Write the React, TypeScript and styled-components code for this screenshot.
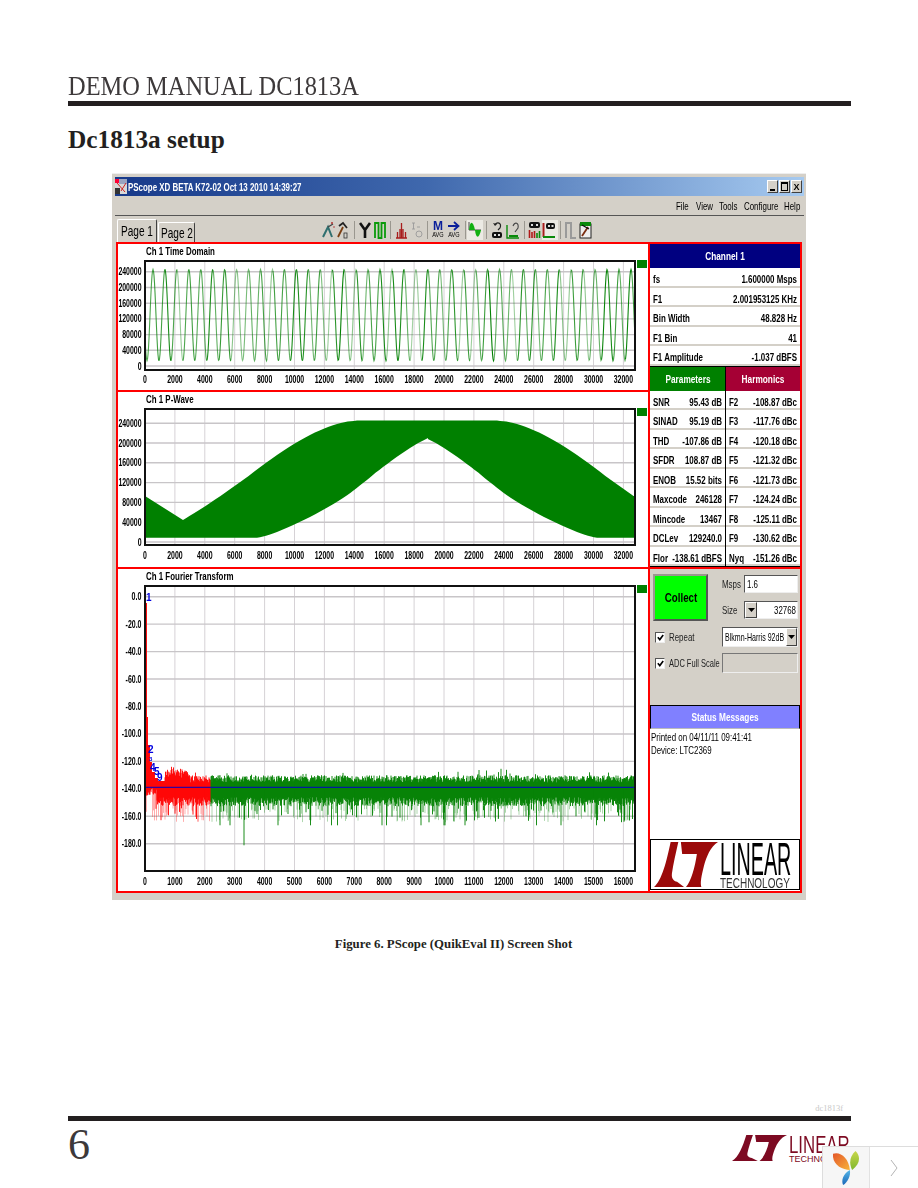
import React from "react";
import styled, { createGlobalStyle } from "styled-components";

const GlobalStyle = createGlobalStyle`
  html, body {
    margin: 0;
    padding: 0;
    background: #fff;
  }
`;

const SANS = `"Liberation Sans", Arial, sans-serif`;
const SERIF = `"Liberation Serif", "Times New Roman", serif`;
const INK = "#231f20";
const GRAY = "#d4d0c8";
const PLOT_GREEN = "#008000";
const PLOT_RED = "#ff0000";

// small seeded random so the noise comes out the same on every load
const seeded = (seed: number) => () => {
  seed = (seed + 0x6d2b79f5) | 0;
  let t = Math.imul(seed ^ (seed >>> 15), 1 | seed);
  t = (t + Math.imul(t ^ (t >>> 7), 61 | t)) ^ t;
  return ((t ^ (t >>> 14)) >>> 0) / 4294967296;
};

/* ---------- plots (local coords, svg starts at x=118) ---------- */

type AxisProps = {
  height: number;
  frameTop: number;
  frameBottom: number;
  yTicks: { label: string; y: number }[];
  xTicks: { label: string; x: number }[];
  labelY: number;
  children?: React.ReactNode;
};

const PLOT_LEFT = 27;
const PLOT_RIGHT = 517;

// the screenshot was squeezed sideways, so every label gets its measured width
const labelWidth = (label: string) =>
  label.split("").reduce((sum, c) => sum + (/\d/.test(c) ? 3.85 : 2.2), 0);

const Axes = ({ height, frameTop, frameBottom, yTicks, xTicks, labelY, children }: AxisProps) => (
  <PlotSvg width={519} height={height} viewBox={`0 0 519 ${height}`}>
    {xTicks.map((t) => (
      <line key={t.label} x1={t.x} x2={t.x} y1={frameTop} y2={frameBottom} stroke="#d6d2d6" strokeWidth={1} />
    ))}
    {yTicks.map((t) => (
      <line key={t.label} x1={PLOT_LEFT} x2={PLOT_RIGHT} y1={t.y} y2={t.y} stroke="#c8c5c8" strokeWidth={1.4} />
    ))}
    {children}
    <rect
      x={PLOT_LEFT}
      y={frameTop}
      width={PLOT_RIGHT - PLOT_LEFT}
      height={frameBottom - frameTop}
      fill="none"
      stroke="#111"
      strokeWidth={2}
    />
    {yTicks.map((t) => (
      <AxisText
        key={t.label}
        x={23.5}
        y={t.y + 3.5}
        textAnchor="end"
        textLength={labelWidth(t.label)}
        lengthAdjust="spacingAndGlyphs"
      >
        {t.label}
      </AxisText>
    ))}
    {xTicks.map((t) => (
      <AxisText
        key={t.label}
        x={t.x}
        y={labelY}
        textAnchor="middle"
        textLength={labelWidth(t.label)}
        lengthAdjust="spacingAndGlyphs"
      >
        {t.label}
      </AxisText>
    ))}
  </PlotSvg>
);

const codeTicks = (y0: number, step: number) =>
  ["0", "40000", "80000", "120000", "160000", "200000", "240000"].map((label, i) => ({
    label,
    y: y0 - i * step,
  }));

const sampleTicks = Array.from({ length: 17 }, (_, i) => ({
  label: String(i * 2000),
  x: PLOT_LEFT + i * 29.9,
}));

const TimeDomainPlot = () => {
  const rand = seeded(11);
  const yOf = (code: number) => 108 - (code / 40000) * 15.7;
  const period = 11.95;
  const segments: { d: string; o: number }[] = [];
  let d = "";
  let lastSign = 0;
  let o = 0.7;
  for (let px = 0; px <= 490; px += 0.5) {
    const phase = (2 * Math.PI * (px - 8)) / period + Math.PI / 2;
    const code = 129800 + 116300 * Math.sin(phase);
    const slope = Math.cos(phase) > 0 ? 1 : -1;
    const point = `${PLOT_LEFT + px} ${yOf(code).toFixed(1)}`;
    if (slope !== lastSign) {
      if (d) segments.push({ d: `${d} L${point}`, o });
      d = `M${point}`;
      o = 0.35 + rand() * 0.65;
      lastSign = slope;
    } else {
      d += ` L${point}`;
    }
  }
  segments.push({ d, o });
  return (
    <Axes
      height={130}
      frameTop={3}
      frameBottom={112}
      yTicks={codeTicks(108, 15.7)}
      xTicks={sampleTicks}
      labelY={125}
    >
      {segments.map((s, i) => (
        <path key={i} d={s.d} fill="none" stroke={PLOT_GREEN} strokeOpacity={s.o} strokeWidth={1.1} />
      ))}
    </Axes>
  );
};

type Pt = [number, number];

// catmull-rom through the points read off the reference
const smooth = (pts: Pt[]): Pt[] => {
  const out: Pt[] = [];
  for (let i = 0; i < pts.length - 1; i++) {
    const p0 = pts[Math.max(i - 1, 0)];
    const p1 = pts[i];
    const p2 = pts[i + 1];
    const p3 = pts[Math.min(i + 2, pts.length - 1)];
    for (let s = 0; s < 6; s++) {
      const t = s / 6;
      const at = (k: 0 | 1) =>
        0.5 *
        (2 * p1[k] +
          (p2[k] - p0[k]) * t +
          (2 * p0[k] - 5 * p1[k] + 4 * p2[k] - p3[k]) * t * t +
          (3 * p1[k] - p0[k] - 3 * p2[k] + p3[k]) * t * t * t);
      out.push([at(0), at(1)]);
    }
  }
  out.push(pts[pts.length - 1]);
  return out;
};

const PWavePlot = () => {
  const toLocal = ([x, y]: Pt): string => `${(x - 118).toFixed(1)},${(y - 406).toFixed(1)}`;
  // right half mirrors round x=427
  const mirror = (points: Pt[]) =>
    [...points]
      .reverse()
      .map(([x, y]): Pt => [854 - x, y])
      .filter(([x]) => x <= 635);
  const rise = smooth([[183, 520], [210, 503], [243, 480], [277, 455], [310, 435], [337, 424], [357, 420.6], [375, 420.6]]).map(
    ([x, y]): Pt => [x, Math.max(y, 420.6)],
  );
  const lift = smooth([[240, 537.7], [257, 537.7], [277, 532], [310, 517], [343, 498], [363, 483], [383, 467], [410, 448], [428, 438]]).map(
    ([x, y]): Pt => [x, Math.min(y, 537.7)],
  );
  const upper: Pt[] = [[145, 496], ...rise, ...mirror(rise), [635, 496]];
  const lower: Pt[] = [[145, 537.7], ...lift, ...mirror(lift.slice(0, -1)), [635, 537.7]];
  const poly = [...upper, ...[...lower].reverse()].map(toLocal).join(" ");
  return (
    <Axes
      height={158}
      frameTop={3}
      frameBottom={139}
      yTicks={codeTicks(136, 19.8)}
      xTicks={sampleTicks}
      labelY={153}
    >
      <polygon points={poly} fill={PLOT_GREEN} />
    </Axes>
  );
};

const dbTicks = ["0.0", "-20.0", "-40.0", "-60.0", "-80.0", "-100.0", "-120.0", "-140.0", "-160.0", "-180.0"].map(
  (label, i) => ({ label, y: 13.7 + i * 27.45 }),
);

const binTicks = Array.from({ length: 17 }, (_, i) => ({
  label: String(i * 1000),
  x: PLOT_LEFT + i * 29.9,
}));

const FLOOR = 204.3;

const redCeiling = (px: number) => {
  if (px < 2) return 20;
  if (px < 3) return 134;
  if (px < 5) return 162;
  if (px < 7) return 179;
  if (px < 10) return 189;
  if (px < 13) return 195;
  if (px < 20) return 198;
  return 0;
};

const SpectrumPlot = () => {
  const rand = seeded(1813);
  const buildNoise = (from: number, to: number) => {
    let solid = "";
    let pale = "";
    for (let px = from; px < to; px += 0.5) {
      const x = (PLOT_LEFT + px).toFixed(1);
      const bump = rand() < 0.06 ? 7 * rand() : 0;
      const ceiling = redCeiling(px);
      const hot = px < 45 && px >= 15;
      const top = ceiling || FLOOR - 5 - rand() * 7 - bump - (hot ? 3 + rand() * 7 : 0);
      const bottom = FLOOR + 10 + rand() * 9 + (px < 12 ? -10 : 0);
      solid += `M${x} ${top.toFixed(1)}V${bottom.toFixed(1)}`;
      const r = rand();
      if (r < 0.3) {
        const depth = r < 0.003 ? 58 : r < 0.02 ? 38 : 21 + rand() * 14;
        const spike = (FLOOR + depth).toFixed(1);
        if (r < 0.12) solid += `M${x} ${bottom.toFixed(1)}V${spike}`;
        else pale += `M${x} ${bottom.toFixed(1)}V${spike}`;
      }
    }
    return { solid, pale };
  };
  const red = buildNoise(0, 66);
  const green = buildNoise(66, 490);
  return (
    <Axes
      height={306}
      frameTop={3}
      frameBottom={288}
      yTicks={dbTicks}
      xTicks={binTicks}
      labelY={302}
    >
      <path d={red.pale} stroke={PLOT_RED} strokeOpacity={0.4} strokeWidth={0.8} fill="none" />
      <path d={green.pale} stroke={PLOT_GREEN} strokeOpacity={0.4} strokeWidth={0.8} fill="none" />
      <path d={red.solid} stroke={PLOT_RED} strokeWidth={0.9} fill="none" />
      <path d={green.solid} stroke={PLOT_GREEN} strokeWidth={0.9} fill="none" />
      <line x1={PLOT_LEFT} x2={PLOT_RIGHT} y1={FLOOR} y2={FLOOR} stroke="#0000c8" strokeWidth={1} />
      <MarkerText x={28} y={18}>1</MarkerText>
      <MarkerText x={30} y={170}>2</MarkerText>
      <MarkerText x={31} y={178} $small>3</MarkerText>
      <MarkerText x={32} y={188}>4</MarkerText>
      <MarkerText x={36} y={192}>5</MarkerText>
      <MarkerText x={39} y={198}>9</MarkerText>
    </Axes>
  );
};

/* ---------- drawn bits ---------- */

const LtMark = ({ color, width, height }: { color: string; width: number; height: number }) => (
  <svg width={width} height={height} viewBox="0 0 100 60" preserveAspectRatio="none">
    <path fill={color} d="M0 60 C12 52 20 25 26 0 H38 C34 15 30 30 28 42 C27 49 31 52 36 53 L47 60 Z" />
    <path fill={color} d="M42 0 H100 C88 6 82 20 78 32 C74 46 72 54 74 60 H50 C58 52 64 34 67 16 H44 Z" />
  </svg>
);

const AppIcon = () => (
  <svg width={12} height={15} viewBox="0 0 12 15">
    <rect width={12} height={15} fill="#d8d8d8" />
    <rect width={4} height={4} fill="#ff0033" />
    <rect x={4} width={8} height={5} fill="#9aa4c0" />
    <rect y={9} width={5} height={6} fill="#333" />
    <path d="M2 4 L10 13 M11 4 L6 12" stroke="#d02020" strokeWidth={1} />
  </svg>
);

const YLogo = () => (
  <svg width={27} height={34} viewBox="0 0 24 36" preserveAspectRatio="none">
    <defs>
      <linearGradient id="petalOrange" x1="0" y1="0" x2="1" y2="1">
        <stop offset="0" stopColor="#e4572a" />
        <stop offset="1" stopColor="#f7b23a" />
      </linearGradient>
      <linearGradient id="petalLime" x1="0" y1="0" x2="0" y2="1">
        <stop offset="0" stopColor="#c8d64a" />
        <stop offset="1" stopColor="#7fb82e" />
      </linearGradient>
      <linearGradient id="petalBlue" x1="0" y1="0" x2="0" y2="1">
        <stop offset="0" stopColor="#57b7e8" />
        <stop offset="1" stopColor="#1a68b8" />
      </linearGradient>
    </defs>
    <path fill="url(#petalOrange)" d="M0 3 C6 0 14 7 15 20 C8 20 -1 14 0 3Z" />
    <path fill="url(#petalLime)" d="M20 0 C25 6 24 14 17 20 C14 13 15 5 20 0Z" />
    <path fill="url(#petalBlue)" d="M15 20 C16 26 13 33 9 36 C7 31 9 24 15 20Z" />
  </svg>
);

const Chevron = () => (
  <svg width={8} height={18} viewBox="0 0 8 18">
    <path d="M1 1 L7 9 L1 17" fill="none" stroke="#b5b5b5" strokeWidth={1} />
  </svg>
);

const CheckMark = () => (
  <svg width={7} height={7} viewBox="0 0 7 7">
    <path d="M0.8 3.2 L2.8 5.6 L6.2 1" fill="none" stroke="#000" strokeWidth={1.6} />
  </svg>
);

const ArrowDown = () => (
  <svg width={7} height={4} viewBox="0 0 7 4">
    <path d="M0 0 H7 L3.5 4Z" fill="#000" />
  </svg>
);

const icon = (w: number, body: React.ReactNode) => (
  <svg width={w} height={18} viewBox={`0 0 ${w} 18`}>
    {body}
  </svg>
);

const buildToolbar = (): { w: number; active?: boolean; sep?: boolean; art?: React.ReactNode }[] => [
  {
    w: 15,
    art: icon(13, (
      <>
        <path d="M1 16 L6 6 L10 16" fill="none" stroke="#2f6f6f" strokeWidth={2} />
        <path d="M6 6 L11 3" stroke="#444" strokeWidth={1.4} />
        <circle cx={10} cy={2} r={1} fill="#b03030" />
        <circle cx={12} cy={6} r={0.8} fill="#b03030" />
      </>
    )),
  },
  {
    w: 17,
    art: icon(11, (
      <>
        <path d="M1 16 L6 6" stroke="#7a3d10" strokeWidth={1.8} />
        <path d="M2 5 L6 2 L10 7" fill="none" stroke="#222" strokeWidth={1.8} />
        <rect x={7} y={12} width={3} height={5} fill="none" stroke="#333" strokeWidth={0.8} />
      </>
    )),
  },
  { w: 5, sep: true },
  { w: 15, art: icon(12, <path d="M1 2 L6 9 L11 2 M6 9 V17" fill="none" stroke="#111" strokeWidth={2.6} />) },
  {
    w: 16,
    art: icon(12, <path d="M1 17 V2 H4.5 V17 H7.5 V2 H11 V17" fill="none" stroke="#0a9a0a" strokeWidth={1.8} />),
  },
  { w: 5, sep: true },
  {
    w: 16,
    art: icon(13, (
      <path d="M1 17 H12 M2.5 17 V11 M5 17 V8 M6.5 17 V2 M8 17 V8 M10.5 17 V11" fill="none" stroke="#a81c1c" strokeWidth={1.3} />
    )),
  },
  {
    w: 16,
    art: icon(12, (
      <g fill="none" stroke="#9a9a9a" strokeWidth={0.9}>
        <path d="M1 2 H4 M2.5 2 V8 M1 8 H4" />
        <path d="M6 6 L9 6" />
        <circle cx={8} cy={13} r={3} />
      </g>
    )),
  },
  { w: 6, sep: true },
  {
    w: 15,
    art: (
      <ToolStack>
        <ToolGlyph $color="#0a1f9a">M</ToolGlyph>
        <ToolCaption>
          <Condensed $k={0.8} $at="center">AVG</Condensed>
        </ToolCaption>
      </ToolStack>
    ),
  },
  {
    w: 17,
    art: (
      <ToolStack>
        <svg width={12} height={10} viewBox="0 0 12 10">
          <path d="M0 5 H10 M6 1 L10.5 5 L6 9" fill="none" stroke="#0a1f9a" strokeWidth={1.8} />
        </svg>
        <ToolCaption>
          <Condensed $k={0.8} $at="center">AVG</Condensed>
        </ToolCaption>
      </ToolStack>
    ),
  },
  { w: 2, sep: true },
  {
    w: 16,
    active: true,
    art: icon(15, (
      <>
        <path d="M2 1 V9 H14" fill="none" stroke="#222" strokeWidth={0.8} />
        <path d="M2 9 C3 -1 6 0 8 9Z" fill="#12b012" />
        <path d="M8 9 C9 18 12 18 14 9Z" fill="#12b012" />
      </>
    )),
  },
  { w: 3 },
  { w: 5, sep: true },
  {
    w: 15,
    art: icon(12, (
      <>
        <path d="M4 4 C6 0 11 2 9 7 L7 9" fill="none" stroke="#222" strokeWidth={1.2} />
        <path d="M2 2 L4 5 L6 3" fill="#222" />
        <rect x={1} y={11} width={10} height={6} rx={2} fill="#111" />
        <rect x={3} y={13} width={2} height={2} fill="#ddd" />
        <rect x={7} y={13} width={2} height={2} fill="#ddd" />
      </>
    )),
  },
  {
    w: 18,
    art: icon(14, (
      <>
        <path d="M1 4 V17 H13" fill="none" stroke="#0a8a0a" strokeWidth={1.4} />
        <path d="M3 16 H12 V14 H3Z" fill="#0a8a0a" />
        <path d="M7 5 C9 0 13 2 12 7 L9 11" fill="none" stroke="#444" strokeWidth={1.1} />
      </>
    )),
  },
  { w: 4, sep: true },
  {
    w: 14,
    art: icon(13, (
      <>
        <rect x={1} y={1} width={11} height={6} rx={2} fill="#111" />
        <rect x={3} y={3} width={2} height={2} fill="#ddd" />
        <rect x={8} y={3} width={2} height={2} fill="#ddd" />
        <path d="M1.5 17 V9 M4 17 V11 M6.5 17 V10" stroke="#b01818" strokeWidth={1.6} />
        <path d="M9 17 V12 M11.5 17 V10" stroke="#0a8a0a" strokeWidth={1.6} />
      </>
    )),
  },
  {
    w: 16,
    active: true,
    art: icon(14, (
      <>
        <path d="M1.5 2 V16" stroke="#a81c1c" strokeWidth={2} />
        <rect x={4} y={2} width={9} height={6} rx={2} fill="#111" />
        <rect x={6} y={4} width={2} height={2} fill="#ddd" />
        <rect x={9.5} y={4} width={2} height={2} fill="#ddd" />
        <path d="M1 16 H13" stroke="#0a8a0a" strokeWidth={2} />
      </>
    )),
  },
  { w: 2 },
  { w: 5, sep: true },
  { w: 14, art: icon(12, <path d="M1 17 V2 H6 V17 H11" fill="none" stroke="#9a9a9a" strokeWidth={2} />) },
  {
    w: 14,
    art: icon(13, (
      <>
        <rect x={1} y={3} width={11} height={14} fill="#eee" stroke="#222" strokeWidth={1} />
        <path d="M3 15 L9 6" stroke="#7a2d10" strokeWidth={1.8} />
        <path d="M1 1 H12 V5 H1Z" fill="#0a8a0a" />
        <path d="M3 4 L10 8" stroke="#111" strokeWidth={1.2} />
      </>
    )),
  },
];

/* ---------- page ---------- */

const menuItems: [string, number][] = [
  ["File", 20],
  ["View", 23],
  ["Tools", 25],
  ["Configure", 40],
  ["Help", 15],
];

const channelRows = [
  ["fs", "1.600000 Msps"],
  ["F1", "2.001953125 KHz"],
  ["Bin Width", "48.828 Hz"],
  ["F1 Bin", "41"],
  ["F1 Amplitude", "-1.037 dBFS"],
];

const parameterRows = [
  ["SNR", "95.43 dB"],
  ["SINAD", "95.19 dB"],
  ["THD", "-107.86 dB"],
  ["SFDR", "108.87 dB"],
  ["ENOB", "15.52 bits"],
  ["Maxcode", "246128"],
  ["Mincode", "13467"],
  ["DCLev", "129240.0"],
  ["Flor", "-138.61 dBFS"],
];

const harmonicRows = [
  ["F2", "-108.87 dBc"],
  ["F3", "-117.76 dBc"],
  ["F4", "-120.18 dBc"],
  ["F5", "-121.32 dBc"],
  ["F6", "-121.73 dBc"],
  ["F7", "-124.24 dBc"],
  ["F8", "-125.11 dBc"],
  ["F9", "-130.62 dBc"],
  ["Nyq", "-151.26 dBc"],
];

const Row = ({ label, value }: { label: string; value: string }) => (
  <DataRow>
    <Condensed $k={0.69}>{label}</Condensed>
    <Condensed $k={0.69} $at="end">{value}</Condensed>
  </DataRow>
);

const App = () => {
  return (
    <Page>
      <GlobalStyle />
      <DocTitle>
        <Condensed $k={0.905}>DEMO MANUAL DC1813A</Condensed>
      </DocTitle>
      <Rule />
      <SectionTitle>Dc1813a setup</SectionTitle>

      <Window>
        <TitleBar>
          <AppIcon />
          <TitleText>
            <Condensed>PScope XD BETA K72-02 Oct 13 2010 14:39:27</Condensed>
          </TitleText>
          <WinButtons>
            <WinButton>
              <MinGlyph />
            </WinButton>
            <WinButton>
              <MaxGlyph />
            </WinButton>
            <WinButton>X</WinButton>
          </WinButtons>
        </TitleBar>
        <MenuBar>
          {menuItems.map(([name, w]) => (
            <MenuItem key={name} $w={w}>
              <Condensed>{name}</Condensed>
            </MenuItem>
          ))}
        </MenuBar>
        <TabRow>
          <Tab $active $w={40}>
            <Condensed $at="center">Page 1</Condensed>
          </Tab>
          <Tab $w={37}>
            <Condensed $at="center">Page 2</Condensed>
          </Tab>
          <Toolbar>
            {buildToolbar().map((item, i) =>
              item.sep ? (
                <ToolSep key={i} $w={item.w} />
              ) : (
                <ToolSlot key={i} $w={item.w} $active={item.active}>
                  {item.art}
                </ToolSlot>
              ),
            )}
          </Toolbar>
        </TabRow>

        <Workspace>
          <PlotColumn>
            <PlotPanel $h={148}>
              <PlotTitle>
                <Condensed>Ch 1 Time Domain</Condensed>
              </PlotTitle>
              <PlotBody>
                <TimeDomainPlot />
                <Led />
              </PlotBody>
            </PlotPanel>
            <PlotPanel $h={177}>
              <PlotTitle>
                <Condensed>Ch 1 P-Wave</Condensed>
              </PlotTitle>
              <PlotBody>
                <PWavePlot />
                <Led />
              </PlotBody>
            </PlotPanel>
            <PlotPanel $h={322} $last>
              <PlotTitle>
                <Condensed>Ch 1 Fourier Transform</Condensed>
              </PlotTitle>
              <PlotBody>
                <SpectrumPlot />
                <Led />
              </PlotBody>
            </PlotPanel>
          </PlotColumn>

          <SideColumn>
            <SideHeader $bg="#000080">
              <Condensed $at="center">Channel 1</Condensed>
            </SideHeader>
            {channelRows.map(([k, v]) => (
              <Row key={k} label={k} value={v} />
            ))}
            <SplitHeaders>
              <SideHeader $bg="#008000">
                <Condensed $at="center">Parameters</Condensed>
              </SideHeader>
              <SideHeader $bg="#a50034">
                <Condensed $at="center">Harmonics</Condensed>
              </SideHeader>
            </SplitHeaders>
            <SplitTable>
              <SplitColumn>
                {parameterRows.map(([k, v]) => (
                  <Row key={k} label={k} value={v} />
                ))}
              </SplitColumn>
              <SplitColumn>
                {harmonicRows.map(([k, v]) => (
                  <Row key={k} label={k} value={v} />
                ))}
              </SplitColumn>
            </SplitTable>

            <ControlPanel>
              <ControlTop>
                <CollectButton>
                  <Condensed $at="center">Collect</Condensed>
                </CollectButton>
                <Fields>
                  <FieldRow>
                    <FieldLabel>
                      <Condensed>Msps</Condensed>
                    </FieldLabel>
                    <InsetBox>
                      <Condensed>1.6</Condensed>
                    </InsetBox>
                  </FieldRow>
                  <FieldRow>
                    <FieldLabel>
                      <Condensed>Size</Condensed>
                    </FieldLabel>
                    <InsetBox $right>
                      <DropButton $flush>
                        <ArrowDown />
                      </DropButton>
                      <Condensed $at="end">32768</Condensed>
                    </InsetBox>
                  </FieldRow>
                </Fields>
              </ControlTop>
              <OptionRow>
                <CheckBox>
                  <CheckMark />
                </CheckBox>
                <OptionLabel>
                  <Condensed>Repeat</Condensed>
                </OptionLabel>
                <SelectBox>
                  <Condensed $k={0.64}>Blkmn-Harris 92dB</Condensed>
                  <DropButton>
                    <ArrowDown />
                  </DropButton>
                </SelectBox>
              </OptionRow>
              <OptionRow>
                <CheckBox>
                  <CheckMark />
                </CheckBox>
                <OptionLabel>
                  <Condensed $k={0.68}>ADC Full Scale</Condensed>
                </OptionLabel>
                <DisabledBox />
              </OptionRow>
            </ControlPanel>

            <StatusHeader>
              <Condensed $at="center">Status Messages</Condensed>
            </StatusHeader>
            <StatusBody>
              <div>
                <Condensed>Printed on 04/11/11 09:41:41</Condensed>
              </div>
              <div>
                <Condensed>Device: LTC2369</Condensed>
              </div>
            </StatusBody>
            <LogoBox>
              <LtMark color="#9b0a0a" width={64} height={45} />
              <LogoWords>
                <LogoLinear>
                  <Condensed $k={0.42}>LINEAR</Condensed>
                </LogoLinear>
                <LogoTech>
                  <Condensed $k={0.665}>TECHNOLOGY</Condensed>
                </LogoTech>
              </LogoWords>
            </LogoBox>
          </SideColumn>
        </Workspace>
      </Window>

      <Caption>Figure 6. PScope (QuikEval II) Screen Shot</Caption>

      <Footer>
        <PartMark>dc1813f</PartMark>
        <Rule />
        <FooterRow>
          <PageNumber>6</PageNumber>
          <FooterLogo>
            <LtMark color="#7d0a22" width={55} height={26} />
            <FooterWords>
              <FooterLinear>
                <Condensed $k={0.7}>LINEAR</Condensed>
              </FooterLinear>
              <FooterTech>
                <Condensed $k={1}>TECHNOLOGY</Condensed>
              </FooterTech>
            </FooterWords>
          </FooterLogo>
        </FooterRow>
      </Footer>

      <AdWidget>
        <AdLogo>
          <YLogo />
        </AdLogo>
        <AdArrow>
          <Chevron />
        </AdArrow>
      </AdWidget>
    </Page>
  );
};

export default App;

// No narrow face is installed and the screenshot is squeezed, so text sits on a
// zero-width anchor and is scaled round it; the parent only places the anchor.
const Condensed = styled.span<{ $k?: number; $at?: "start" | "center" | "end" }>`
  display: inline-flex;
  width: 0;
  flex: none;
  white-space: nowrap;
  justify-content: ${(p) => (p.$at === "center" ? "center" : p.$at === "end" ? "flex-end" : "flex-start")};
  transform: scaleX(${(p) => p.$k ?? 0.72});
  transform-origin: 0 50%;
`;

const Page = styled.div`
  position: relative;
  box-sizing: border-box;
  width: 918px;
  height: 1188px;
  padding: 72px 67px 26px 68px;
  display: flex;
  flex-direction: column;
  overflow: hidden;
  background: #fff;
  color: ${INK};
`;

const DocTitle = styled.div`
  height: 29px;
  line-height: 29px;
  font-family: ${SERIF};
  font-size: 27px;
  color: #3d393a;
`;

const Rule = styled.div`
  height: 5px;
  flex: none;
  background: ${INK};
`;

const SectionTitle = styled.h2`
  margin: 20px 0 0;
  height: 27px;
  line-height: 27px;
  font-family: ${SERIF};
  font-size: 25.3px;
  font-weight: 700;
`;

const Window = styled.div`
  box-sizing: border-box;
  flex: none;
  width: 694px;
  height: 727px;
  margin: 20px 0 0 44px;
  padding: 3px 2px 0 3px;
  background: ${GRAY};
  border-top: 1px solid #eee;
  filter: blur(0.35px);
  font-family: ${SANS};
  color: #000;
`;

const TitleBar = styled.div`
  height: 19px;
  display: flex;
  align-items: center;
  gap: 1px;
  background: linear-gradient(to right, #17398a, #3f68ad 45%, #a6caf0);
`;

const TitleText = styled.span`
  color: #fff;
  font-size: 11px;
  font-weight: 700;
`;

const WinButtons = styled.div`
  margin-left: auto;
  margin-right: 2px;
  display: flex;
  gap: 1px;
`;

const WinButton = styled.div`
  box-sizing: border-box;
  width: 11px;
  height: 13px;
  background: ${GRAY};
  border: 1px solid;
  border-color: #fff #404040 #404040 #fff;
  display: flex;
  align-items: center;
  justify-content: center;
  font-size: 9px;
  font-weight: 700;
`;

const MinGlyph = styled.div`
  width: 5px;
  height: 2px;
  background: #000;
  margin-top: 6px;
`;

const MaxGlyph = styled.div`
  box-sizing: border-box;
  width: 7px;
  height: 9px;
  border: 1px solid #000;
  border-top-width: 2px;
`;

const MenuBar = styled.div`
  height: 20px;
  box-sizing: border-box;
  display: flex;
  align-items: center;
  justify-content: flex-end;
  padding-right: 5px;
  border-bottom: 1px solid #555;
  font-size: 11px;
`;

const MenuItem = styled.span<{ $w: number }>`
  width: ${(p) => p.$w}px;
`;

const TabRow = styled.div`
  height: 26px;
  display: flex;
  align-items: flex-end;
  padding-left: 2px;
`;

const Tab = styled.div<{ $active?: boolean; $w: number }>`
  box-sizing: border-box;
  width: ${(p) => p.$w}px;
  height: ${(p) => (p.$active ? 23 : 20)}px;
  margin-right: 1px;
  display: flex;
  align-items: center;
  justify-content: center;
  font-size: 14px;
  border: 1px solid #fff;
  border-right-color: #404040;
  border-bottom: none;
  border-radius: 2px 2px 0 0;
`;

const Toolbar = styled.div`
  margin-left: auto;
  margin-right: 211px;
  height: 24px;
  display: flex;
  align-items: center;
`;

const ToolSlot = styled.div<{ $w: number; $active?: boolean }>`
  width: ${(p) => p.$w}px;
  height: 20px;
  display: flex;
  align-items: center;
  justify-content: flex-start;
  background: ${(p) => (p.$active ? "#eceae4" : "transparent")};
`;

const ToolSep = styled.div<{ $w: number }>`
  width: ${(p) => p.$w}px;
  height: 18px;
  box-sizing: border-box;
  border-left: 1px solid #9a978f;
`;

const ToolStack = styled.div`
  display: flex;
  flex-direction: column;
  align-items: center;
  line-height: 1;
`;

const ToolGlyph = styled.span<{ $color: string }>`
  font-size: 12px;
  font-weight: 700;
  color: ${(p) => p.$color};
  line-height: 10px;
`;

const ToolCaption = styled.span`
  font-size: 7px;
  line-height: 8px;
`;

const Workspace = styled.div`
  box-sizing: border-box;
  width: 686px;
  height: 651px;
  margin-left: 1px;
  border: 2px solid #ff0000;
  display: flex;
  background: #fff;
`;

const PlotColumn = styled.div`
  box-sizing: border-box;
  width: 532px;
  flex: none;
  border-right: 2px solid #ff0000;
`;

const PlotPanel = styled.div<{ $h: number; $last?: boolean }>`
  box-sizing: border-box;
  height: ${(p) => p.$h}px;
  border-bottom: ${(p) => (p.$last ? "none" : "2px solid #ff0000")};
`;

const PlotTitle = styled.div`
  height: 14px;
  line-height: 14px;
  padding-left: 28px;
  font-size: 11px;
  font-weight: 700;
`;

const PlotBody = styled.div`
  display: flex;
  align-items: flex-start;
`;

const PlotSvg = styled.svg`
  display: block;
  flex: none;
  overflow: visible;
`;

const AxisText = styled.text`
  font-family: ${SANS};
  font-size: 10.5px;
  font-weight: 700;
  fill: #000;
`;

const MarkerText = styled.text<{ $small?: boolean }>`
  font-family: ${SANS};
  font-size: ${(p) => (p.$small ? 6 : 10)}px;
  font-weight: 700;
  fill: #0000e0;
`;

const Led = styled.div`
  width: 10px;
  height: 8px;
  margin-top: 2px;
  background: #008000;
`;

const SideColumn = styled.div`
  width: 150px;
  flex: none;
  display: flex;
  flex-direction: column;
`;

const SideHeader = styled.div<{ $bg: string }>`
  flex: none;
  height: 24px;
  display: flex;
  align-items: center;
  justify-content: center;
  color: #fff;
  font-size: 11.5px;
  font-weight: 700;
  background: ${(p) => p.$bg};
`;

const DataRow = styled.div`
  box-sizing: border-box;
  height: 19.5px;
  padding: 5px 3px 0;
  display: flex;
  justify-content: space-between;
  align-items: center;
  font-size: 11.5px;
  font-weight: 700;
  border-bottom: 2px solid ${GRAY};
`;

const SplitHeaders = styled.div`
  display: flex;
  border-top: 1px solid #000;
  & > div {
    flex: 1;
  }
  & > div:first-child {
    flex: none;
    width: 75px;
    border-right: 1px solid #000;
  }
`;

const SplitTable = styled.div`
  display: flex;
  border-bottom: 1px solid #000;
`;

const SplitColumn = styled.div`
  width: 74px;
  flex: 1;
  &:first-child {
    flex: none;
    width: 75px;
    border-right: 1px solid #000;
  }
`;

const ControlPanel = styled.div`
  box-sizing: border-box;
  height: 138px;
  flex: none;
  padding: 5px 2px 0 3px;
  background: ${GRAY};
  display: flex;
  flex-direction: column;
  gap: 6px;
  border-top: 2px solid #ff0000;
`;

const ControlTop = styled.div`
  display: flex;
  justify-content: space-between;
`;

const CollectButton = styled.div`
  box-sizing: border-box;
  width: 55px;
  height: 47px;
  display: flex;
  align-items: center;
  justify-content: center;
  background: #00ff00;
  border: 2px solid;
  border-color: #9a978f #555 #555 #9a978f;
  font-size: 13.5px;
  font-weight: 700;
`;

const Fields = styled.div`
  width: 76px;
  padding-top: 1px;
  display: flex;
  flex-direction: column;
  gap: 8px;
`;

const FieldRow = styled.div`
  display: flex;
  align-items: center;
  justify-content: space-between;
`;

const FieldLabel = styled.span`
  font-size: 11px;
  color: #222;
`;

const InsetBox = styled.div<{ $right?: boolean }>`
  box-sizing: border-box;
  width: 54px;
  height: 18px;
  background: #fff;
  border: 1px solid;
  border-color: #555 #eee #eee #555;
  display: flex;
  align-items: center;
  justify-content: ${(p) => (p.$right ? "space-between" : "flex-start")};
  padding: ${(p) => (p.$right ? "0 1px 0 0" : "0 2px")};
  font-size: 11px;
`;

const DropButton = styled.div<{ $flush?: boolean }>`
  box-sizing: border-box;
  width: ${(p) => (p.$flush ? 12 : 11)}px;
  align-self: stretch;
  flex: none;
  background: ${GRAY};
  border: 1px solid;
  border-color: #fff #404040 #404040 #fff;
  display: flex;
  align-items: center;
  justify-content: center;
`;

const OptionRow = styled.div`
  display: flex;
  align-items: center;
  height: 20px;
  padding-left: 2px;
`;

const CheckBox = styled.div`
  box-sizing: border-box;
  width: 10px;
  height: 11px;
  background: #fff;
  border: 1px solid;
  border-color: #555 #eee #eee #555;
  display: flex;
  align-items: center;
  justify-content: center;
  flex: none;
`;

const OptionLabel = styled.span`
  margin-left: 4px;
  font-size: 11px;
  color: #222;
`;

const SelectBox = styled.div`
  box-sizing: border-box;
  width: 76px;
  height: 20px;
  margin-left: auto;
  padding-left: 2px;
  background: #fff;
  border: 1px solid;
  border-color: #555 #eee #eee #555;
  display: flex;
  align-items: center;
  justify-content: space-between;
  font-size: 11px;
`;

const DisabledBox = styled.div`
  box-sizing: border-box;
  width: 76px;
  height: 20px;
  margin-left: auto;
  background: ${GRAY};
  border: 1px solid;
  border-color: #777 #eee #eee #777;
`;

const StatusHeader = styled.div`
  box-sizing: border-box;
  height: 24px;
  flex: none;
  display: flex;
  align-items: center;
  justify-content: center;
  color: #fff;
  font-size: 11.5px;
  font-weight: 700;
  background: #8080ff;
  border: 1px solid #000;
  border-bottom-color: #bbb;
`;

const StatusBody = styled.div`
  flex: 1;
  padding: 2px 1px;
  box-sizing: border-box;
  font-size: 11px;
  line-height: 13px;
`;

const LogoBox = styled.div`
  box-sizing: border-box;
  height: 51px;
  flex: none;
  margin-bottom: 1px;
  padding: 2px 6px 2px 3px;
  border: 1px solid #000;
  display: flex;
  align-items: center;
  gap: 2px;
`;

const LogoWords = styled.div`
  display: flex;
  flex-direction: column;
  flex: 1;
`;

const LogoLinear = styled.span`
  font-size: 47px;
  line-height: 34px;
  height: 34px;
`;

const LogoTech = styled.span`
  margin-top: 1px;
  font-size: 15px;
  line-height: 11px;
  color: #333;
`;

const Caption = styled.div`
  margin-top: 37px;
  height: 15px;
  line-height: 15px;
  text-align: center;
  padding-right: 12px;
  font-family: ${SERIF};
  font-size: 12.8px;
  font-weight: 700;
`;

const Footer = styled.div`
  margin-top: auto;
  display: flex;
  flex-direction: column;
`;

const PartMark = styled.div`
  align-self: flex-end;
  margin-right: 8px;
  height: 13px;
  font-family: ${SERIF};
  font-size: 8.5px;
  color: #c8c8c8;
`;

const FooterRow = styled.div`
  height: 41px;
  display: flex;
  justify-content: space-between;
  align-items: flex-start;
`;

const PageNumber = styled.div`
  margin-top: 2px;
  font-family: ${SERIF};
  font-size: 44px;
  line-height: 44px;
  color: #3d393a;
`;

const FooterLogo = styled.div`
  margin-top: 14px;
  display: flex;
  gap: 2px;
  width: 119px;
`;

const FooterWords = styled.div`
  width: 62px;
  display: flex;
  flex-direction: column;
  font-family: ${SANS};
  color: #7d0a22;
`;

const FooterLinear = styled.span`
  font-size: 24px;
  line-height: 19px;
  height: 19px;
`;

const FooterTech = styled.span`
  margin-top: 2px;
  font-size: 9px;
  line-height: 7px;
`;

const AdWidget = styled.div`
  position: absolute;
  right: 0;
  bottom: 0;
  width: 96px;
  height: 42px;
  box-sizing: border-box;
  display: flex;
  background: #f6f6f6;
  border: 1px solid #ddd;
  border-right: none;
  border-bottom: none;
`;

const AdLogo = styled.div`
  width: 46px;
  border-right: 1px solid #e2e2e2;
  display: flex;
  align-items: center;
  justify-content: center;
`;

const AdArrow = styled.div`
  flex: 1;
  background: #fff;
  display: flex;
  align-items: center;
  justify-content: center;
`;
